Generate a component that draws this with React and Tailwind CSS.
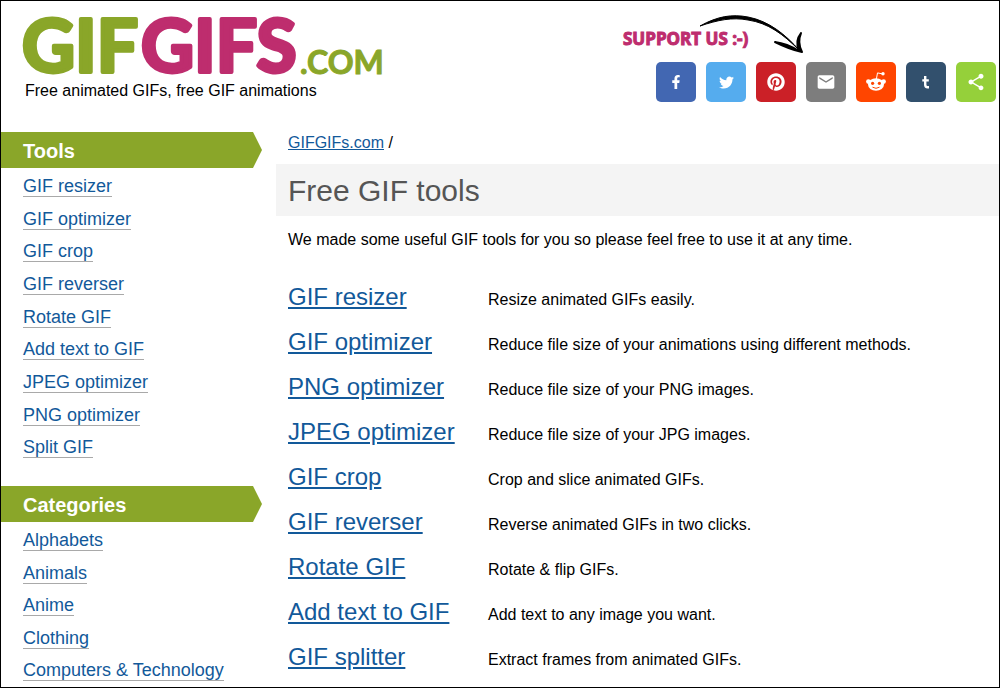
import { FaFacebookF, FaTwitter, FaPinterest } from 'react-icons/fa';
import { MdEmail, MdShare } from 'react-icons/md';

const toolLinks = [
  'GIF resizer',
  'GIF optimizer',
  'GIF crop',
  'GIF reverser',
  'Rotate GIF',
  'Add text to GIF',
  'JPEG optimizer',
  'PNG optimizer',
  'Split GIF',
];

const categoryLinks = ['Alphabets', 'Animals', 'Anime', 'Clothing', 'Computers & Technology'];

const tools = [
  ['GIF resizer', 'Resize animated GIFs easily.'],
  ['GIF optimizer', 'Reduce file size of your animations using different methods.'],
  ['PNG optimizer', 'Reduce file size of your PNG images.'],
  ['JPEG optimizer', 'Reduce file size of your JPG images.'],
  ['GIF crop', 'Crop and slice animated GIFs.'],
  ['GIF reverser', 'Reverse animated GIFs in two clicks.'],
  ['Rotate GIF', 'Rotate & flip GIFs.'],
  ['Add text to GIF', 'Add text to any image you want.'],
  ['GIF splitter', 'Extract frames from animated GIFs.'],
];

function TumblrIcon() {
  return (
    <svg width="40" height="40" viewBox="0 0 40 40" fill="none" stroke="#fff" strokeWidth="2.4">
      <path d="M19.2 14V22.6Q19.2 25.3 21.6 25.3H23M16.3 18.4H22.8" />
    </svg>
  );
}

function RedditIcon() {
  return (
    <svg width="40" height="40" viewBox="0 0 40 40" fill="#fff">
      <ellipse cx="20" cy="22.5" rx="8" ry="6.2" />
      <circle cx="12.4" cy="19.6" r="2.3" />
      <circle cx="27.6" cy="19.6" r="2.3" />
      <circle cx="27" cy="11.8" r="1.7" />
      <path d="M20.4 17L21.5 10.9L26 11.8" fill="none" stroke="#fff" strokeWidth="1" />
      <circle cx="16.6" cy="21.3" r="1.6" fill="#ff4500" />
      <circle cx="23.4" cy="21.3" r="1.6" fill="#ff4500" />
      <path d="M16.5 25.2Q20 27.4 23.5 25.2" fill="none" stroke="#ff4500" strokeWidth="1" />
    </svg>
  );
}

const shares = [
  { label: 'Facebook', color: 'bg-[#4267b2]', icon: <FaFacebookF size={14} /> },
  { label: 'Twitter', color: 'bg-[#55acee]', icon: <FaTwitter size={15} /> },
  { label: 'Pinterest', color: 'bg-[#cb2027]', icon: <FaPinterest size={18} /> },
  { label: 'Email', color: 'bg-[#7d7d7d]', icon: <MdEmail size={20} /> },
  { label: 'Reddit', color: 'bg-[#ff4500]', icon: <RedditIcon /> },
  { label: 'Tumblr', color: 'bg-[#32506d]', icon: <TumblrIcon /> },
  { label: 'Share', color: 'bg-[#95d03a]', icon: <MdShare size={20} /> },
];

function Logo() {
  return (
    <a href="#" aria-label="GIFGIFs.com" className="block h-[68px] w-max">
      <svg width="364" height="68" viewBox="0 0 364 68" className="overflow-visible font-['Lato',sans-serif] font-bold">
        <g strokeLinejoin="round" strokeWidth="4">
          <text x="-1" y="60" fontSize="73" fill="#8aa629" stroke="#8aa629">GIF</text>
          <text x="118" y="60" fontSize="73" fill="#be2d6e" stroke="#be2d6e">GIFS</text>
        </g>
        <text x="277" y="62" fontSize="32" fill="#8aa629" stroke="#8aa629" strokeWidth="1">.COM</text>
      </svg>
    </a>
  );
}

function SupportUs() {
  return (
    <svg
      width="190"
      height="50"
      viewBox="0 0 190 50"
      className="mb-1 overflow-visible font-['Open_Sans',sans-serif] font-bold"
    >
      <text x="1" y="37" fontSize="17" fill="#be2d6e" stroke="#be2d6e" strokeWidth="1">
        SUPPORT US :-)
      </text>
      <path
        d="M78 18C96 8 110 6 126 9C147 13 164 27 177 42C161 26 146 15 126 12C110 9 96 12 78 18Z"
        fill="#000"
        stroke="#000"
        strokeWidth="1"
      />
      <path
        d="M153 34C161 35 169 38 177 43C174 36 175 30 179 25C176 32 177 38 180 44C171 42 161 38 153 34Z"
        fill="#000"
        stroke="#000"
        strokeWidth="2"
        strokeLinejoin="round"
      />
    </svg>
  );
}

function Menu({ title, items, listClass }) {
  return (
    <nav className="mb-[22px]">
      <h2 className="flex h-9 w-[261px] items-center bg-[#8aa629] pt-[2px] pl-[22px] text-xl font-bold text-white [clip-path:polygon(0_0,252px_0,100%_50%,252px_100%,0_100%)]">
        {title}
      </h2>
      <ul className={`grid auto-rows-fr pt-[2px] pl-[22px] text-lg leading-[33px] ${listClass}`}>
        {items.map((item) => (
          <li key={item}>
            <a href="#" className="border-b border-[#a9a9a9] text-[#12599a]">{item}</a>
          </li>
        ))}
      </ul>
    </nav>
  );
}

export default function App() {
  return (
    <div className="flex h-screen flex-col overflow-hidden border border-black bg-white font-['Liberation_Sans',Arial,sans-serif] text-base text-black">
      <header className="flex shrink-0 items-start justify-between pr-[3px] pl-[22px]">
        <div className="pt-[11px]">
          <Logo />
          <p className="pl-[2px] leading-[22px]">Free animated GIFs, free GIF animations</p>
        </div>
        <div className="flex w-[374px] flex-col pt-[7px]">
          <SupportUs />
          <div className="flex justify-end gap-[10px]">
            {shares.map((s) => (
              <button
                key={s.label}
                type="button"
                aria-label={s.label}
                className={`flex size-10 items-center justify-center rounded-[5px] text-white ${s.color}`}
              >
                {s.icon}
              </button>
            ))}
          </div>
        </div>
      </header>

      <div className="mt-[30px] flex items-start">
        <aside className="w-[275px] shrink-0">
          <Menu title="Tools" items={toolLinks} listClass="h-[296px]" />
          <Menu title="Categories" items={categoryLinks} listClass="h-[165px]" />
        </aside>
        <main className="grow">
          <p className="pl-3 leading-[22px]">
            <a href="#" className="text-[#12599a] underline">GIFGIFs.com</a> /
          </p>
          <h1 className="mt-[10px] flex h-[52px] items-center bg-[#f4f4f4] pl-3 text-[30px] text-[#555]">
            Free GIF tools
          </h1>
          <p className="mt-[14px] pl-3 leading-5">
            We made some useful GIF tools for you so please feel free to use it at any time.
          </p>
          <table className="mt-6 ml-3">
            <tbody>
              {tools.map(([name, description]) => (
                <tr key={name} className="h-[45px] align-baseline">
                  <td className="w-[200px] text-2xl leading-[45px]">
                    <a href="#" className="text-[#12599a] underline">{name}</a>
                  </td>
                  <td>{description}</td>
                </tr>
              ))}
            </tbody>
          </table>
        </main>
      </div>
    </div>
  );
}
